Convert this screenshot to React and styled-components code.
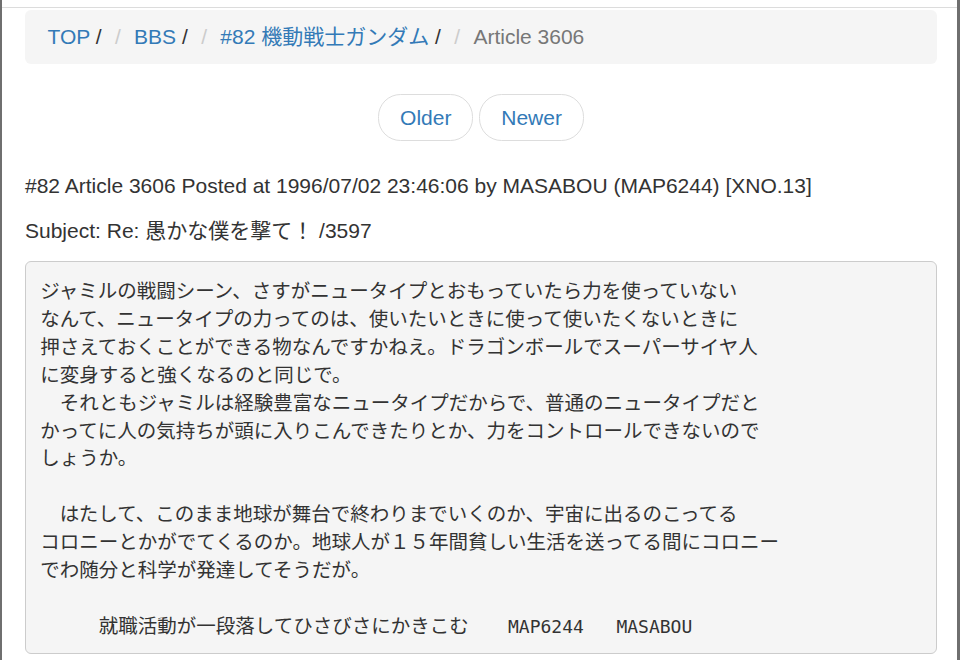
import React from "react";
import styled, { createGlobalStyle } from "styled-components";

const GlobalStyle = createGlobalStyle`
  html, body {
    margin: 0;
    padding: 0;
    background: #fff;
  }
  body {
    font-family: "Liberation Sans", Arial, "Noto Sans CJK JP", sans-serif;
    font-size: 21px;
    line-height: 30px;
    color: #333;
  }
  * { box-sizing: border-box; }
`;

const Frame = styled.div`
  height: 660px;
  overflow: hidden;
  border-left: 2px solid #6f6f6f;
  border-right: 3px solid #6f6f6f;
  padding-top: 7px;
`;

const TopRule = styled.div`
  border-top: 1px solid #dcdcdc;
`;

const Container = styled.div`
  padding: 2px 20px 0 23px;
`;

const Ja = styled.span`
  font-family: "Noto Sans CJK JP", sans-serif;
  line-height: 1;
`;

const Breadcrumb = styled.ol`
  list-style: none;
  margin: 0 0 30px;
  padding: 12px 22.5px;
  background: #f5f5f5;
  border-radius: 6px;
`;

const Crumb = styled.li`
  display: inline-block;
  color: ${(p) => (p.$active ? "#777" : "#333")};
  &:not(:first-child)::before {
    content: "/\\00a0";
    padding: 0 7.5px;
    color: #ccc;
  }
`;

const Link = styled.a`
  color: #337ab7;
  text-decoration: none;
`;

const Pager = styled.ul`
  list-style: none;
  margin: 30px 0;
  padding: 0;
  text-align: center;
`;

const PagerItem = styled.li`
  display: inline;
`;

const PagerLink = styled.a`
  display: inline-block;
  padding: 7.5px 21px;
  background: #fff;
  border: 1px solid #ddd;
  border-radius: 22.5px;
  color: #337ab7;
  text-decoration: none;
`;

const Para = styled.p`
  margin: 0 0 15px;
`;

const Body = styled.pre`
  margin: 0 0 15px;
  padding: 14.25px;
  font-family: "Noto Sans CJK JP", monospace;
  font-size: 19.5px;
  line-height: 27.86px;
  color: #333;
  background: #f5f5f5;
  border: 1px solid #ccc;
  border-radius: 6px;
  white-space: pre-wrap;
  word-break: break-all;
`;

const Mono = styled.span`
  font-family: "DejaVu Sans Mono", "Liberation Mono", monospace;
  font-size: 18px;
  line-height: 1;
  margin-left: -4px;
`;

const lines = [
  "ジャミルの戦闘シーン、さすがニュータイプとおもっていたら力を使っていない",
  "なんて、ニュータイプの力ってのは、使いたいときに使って使いたくないときに",
  "押さえておくことができる物なんですかねえ。ドラゴンボールでスーパーサイヤ人",
  "に変身すると強くなるのと同じで。",
  "　それともジャミルは経験豊富なニュータイプだからで、普通のニュータイプだと",
  "かってに人の気持ちが頭に入りこんできたりとか、力をコントロールできないので",
  "しょうか。",
  "",
  "　はたして、このまま地球が舞台で終わりまでいくのか、宇宙に出るのこってる",
  "コロニーとかがでてくるのか。地球人が１５年間貧しい生活を送ってる間にコロニー",
  "でわ随分と科学が発達してそうだが。",
  "",
];

export default function App() {
  return (
    <>
      <GlobalStyle />
      <Frame>
        <TopRule />
        <Container>
          <Breadcrumb>
            <Crumb>
              <Link href="#">TOP</Link> /
            </Crumb>{" "}
            <Crumb>
              <Link href="#">BBS</Link> /
            </Crumb>{" "}
            <Crumb>
              <Link href="#">
                #82 <Ja>機動戦士ガンダム</Ja>
              </Link>{" "}
              /
            </Crumb>{" "}
            <Crumb $active>Article 3606</Crumb>
          </Breadcrumb>

          <Pager>
            <PagerItem>
              <PagerLink href="#">Older</PagerLink>
            </PagerItem>{" "}
            <PagerItem>
              <PagerLink href="#">Newer</PagerLink>
            </PagerItem>
          </Pager>

          <Para>
            #82 Article 3606 Posted at 1996/07/02 23:46:06 by MASABOU (MAP6244) [XNO.13]
          </Para>
          <Para>
            Subject: Re: <Ja>愚かな僕を撃て！</Ja> /3597
          </Para>

          <Body>
            {lines.join("\n") + "\n"}
            {"　　　就職活動が一段落してひさびさにかきこむ"}
            <Mono>{"    MAP6244   MASABOU"}</Mono>
          </Body>
        </Container>
      </Frame>
    </>
  );
}
